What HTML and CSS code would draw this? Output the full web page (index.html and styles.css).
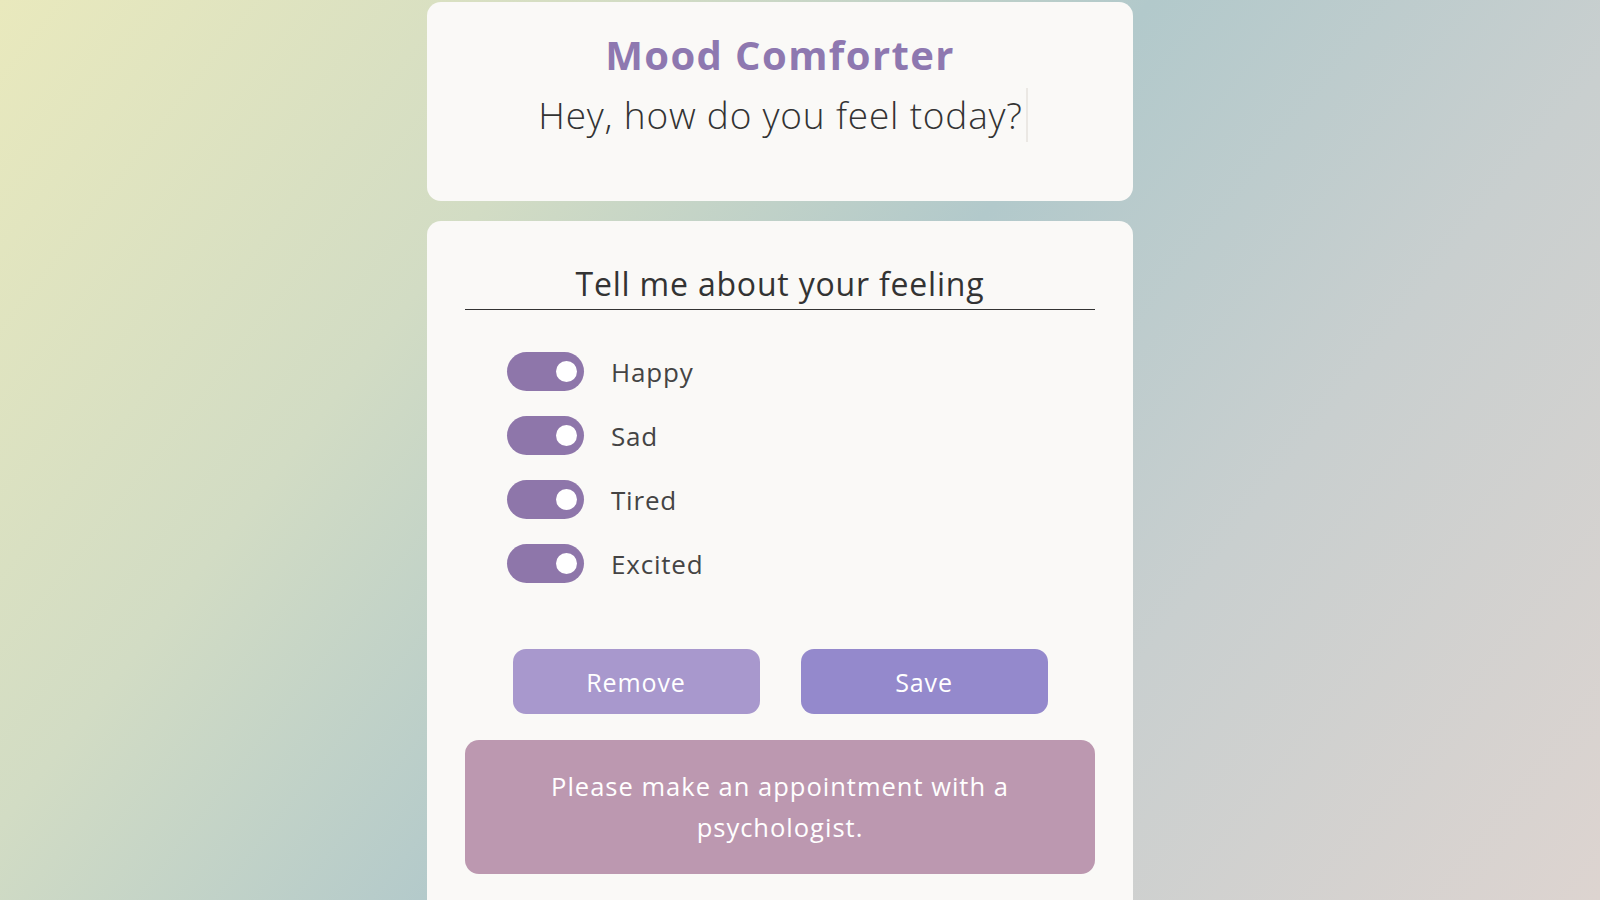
FILE: index.html
```html
<!DOCTYPE html>
<html lang="en">
<head>
<meta charset="utf-8">
<title>Mood Comforter</title>
<link rel="stylesheet" href="styles.css">
</head>
<body>
<main class="app">
  <header class="card intro">
    <h1 class="title">Mood Comforter</h1>
    <p class="greeting"><span class="typed">Hey, how do you feel today?</span></p>
  </header>
  <section class="card feelings">
    <h2 class="feel-heading">Tell me about your feeling</h2>
    <ul class="toggle-list">
      <li class="toggle-row"><span class="switch"><span class="knob"></span></span><span class="label">Happy</span></li>
      <li class="toggle-row"><span class="switch"><span class="knob"></span></span><span class="label">Sad</span></li>
      <li class="toggle-row"><span class="switch"><span class="knob"></span></span><span class="label">Tired</span></li>
      <li class="toggle-row"><span class="switch"><span class="knob"></span></span><span class="label">Excited</span></li>
    </ul>
    <div class="actions">
      <button class="btn btn-remove">Remove</button>
      <button class="btn btn-save">Save</button>
    </div>
    <div class="advice">Please make an appointment with a psychologist.</div>
  </section>
</main>
</body>
</html>
```

FILE: styles.css
```css
* { box-sizing: border-box; }

html, body {
  margin: 0;
  padding: 0;
  height: 900px;
  overflow: hidden;
}

body {
  font-family: "Open Sans", "DejaVu Sans", sans-serif;
  background: linear-gradient(128deg, #e9e9bd 0%, #d2dcc4 28%, #b2c9cb 50%, #c9cfcf 72%, #ddd4d0 100%);
  color: #333;
}

.app {
  width: 706px;
  margin: 2px 0 0 427px;
  display: flex;
  flex-direction: column;
  gap: 20px;
}

.card {
  background: #faf9f7;
  border-radius: 14px;
}

.intro {
  height: 199px;
  padding-top: 26px;
  text-align: center;
}

.title {
  margin: 0;
  font-size: 40px;
  line-height: 54px;
  font-weight: 700;
  letter-spacing: 1.4px;
  color: #8e78b0;
}

.greeting {
  margin: 6px 0 0;
  padding-left: 6px;
  font-size: 37px;
  line-height: 54px;
  font-weight: 300;
  letter-spacing: 0.8px;
  color: #333;
}

.typed {
  display: inline-block;
  padding-right: 3px;
  border-right: 2px solid #ebe8e4;
}

.feelings {
  padding: 43px 38px 40px;
  min-height: 700px;
}

.feel-heading {
  margin: 0;
  padding-bottom: 5px;
  border-bottom: 1px solid #333;
  text-align: center;
  font-size: 32px;
  line-height: 40px;
  font-weight: 400;
  letter-spacing: 0.8px;
  color: #333;
}

.toggle-list {
  list-style: none;
  margin: 42px 0 0;
  padding: 0 0 0 42px;
  display: flex;
  flex-direction: column;
  gap: 25px;
}

.toggle-row {
  display: flex;
  align-items: center;
  gap: 27px;
  height: 39px;
}

.switch {
  width: 77px;
  height: 39px;
  border-radius: 20px;
  background: #8e76aa;
  display: flex;
  align-items: center;
  justify-content: flex-end;
  padding-right: 7px;
}

.knob {
  width: 21px;
  height: 21px;
  border-radius: 50%;
  background: #fff;
}

.label {
  font-size: 26px;
  letter-spacing: 0.8px;
  color: #444;
}

.actions {
  margin-top: 66px;
  display: flex;
  justify-content: center;
  gap: 41px;
}

.btn {
  width: 247px;
  height: 65px;
  border: none;
  border-radius: 13px;
  color: #fff;
  font-family: inherit;
  font-size: 25px;
  letter-spacing: 0.9px;
}

.btn-remove { background: #a898cd; }
.btn-save { background: #9489cc; }

.advice {
  margin-top: 26px;
  height: 134px;
  padding: 26px 60px 22px;
  border-radius: 14px;
  background: #bc98b0;
  color: #fff;
  text-align: center;
  font-size: 25.5px;
  line-height: 41px;
  letter-spacing: 1px;
}
```
